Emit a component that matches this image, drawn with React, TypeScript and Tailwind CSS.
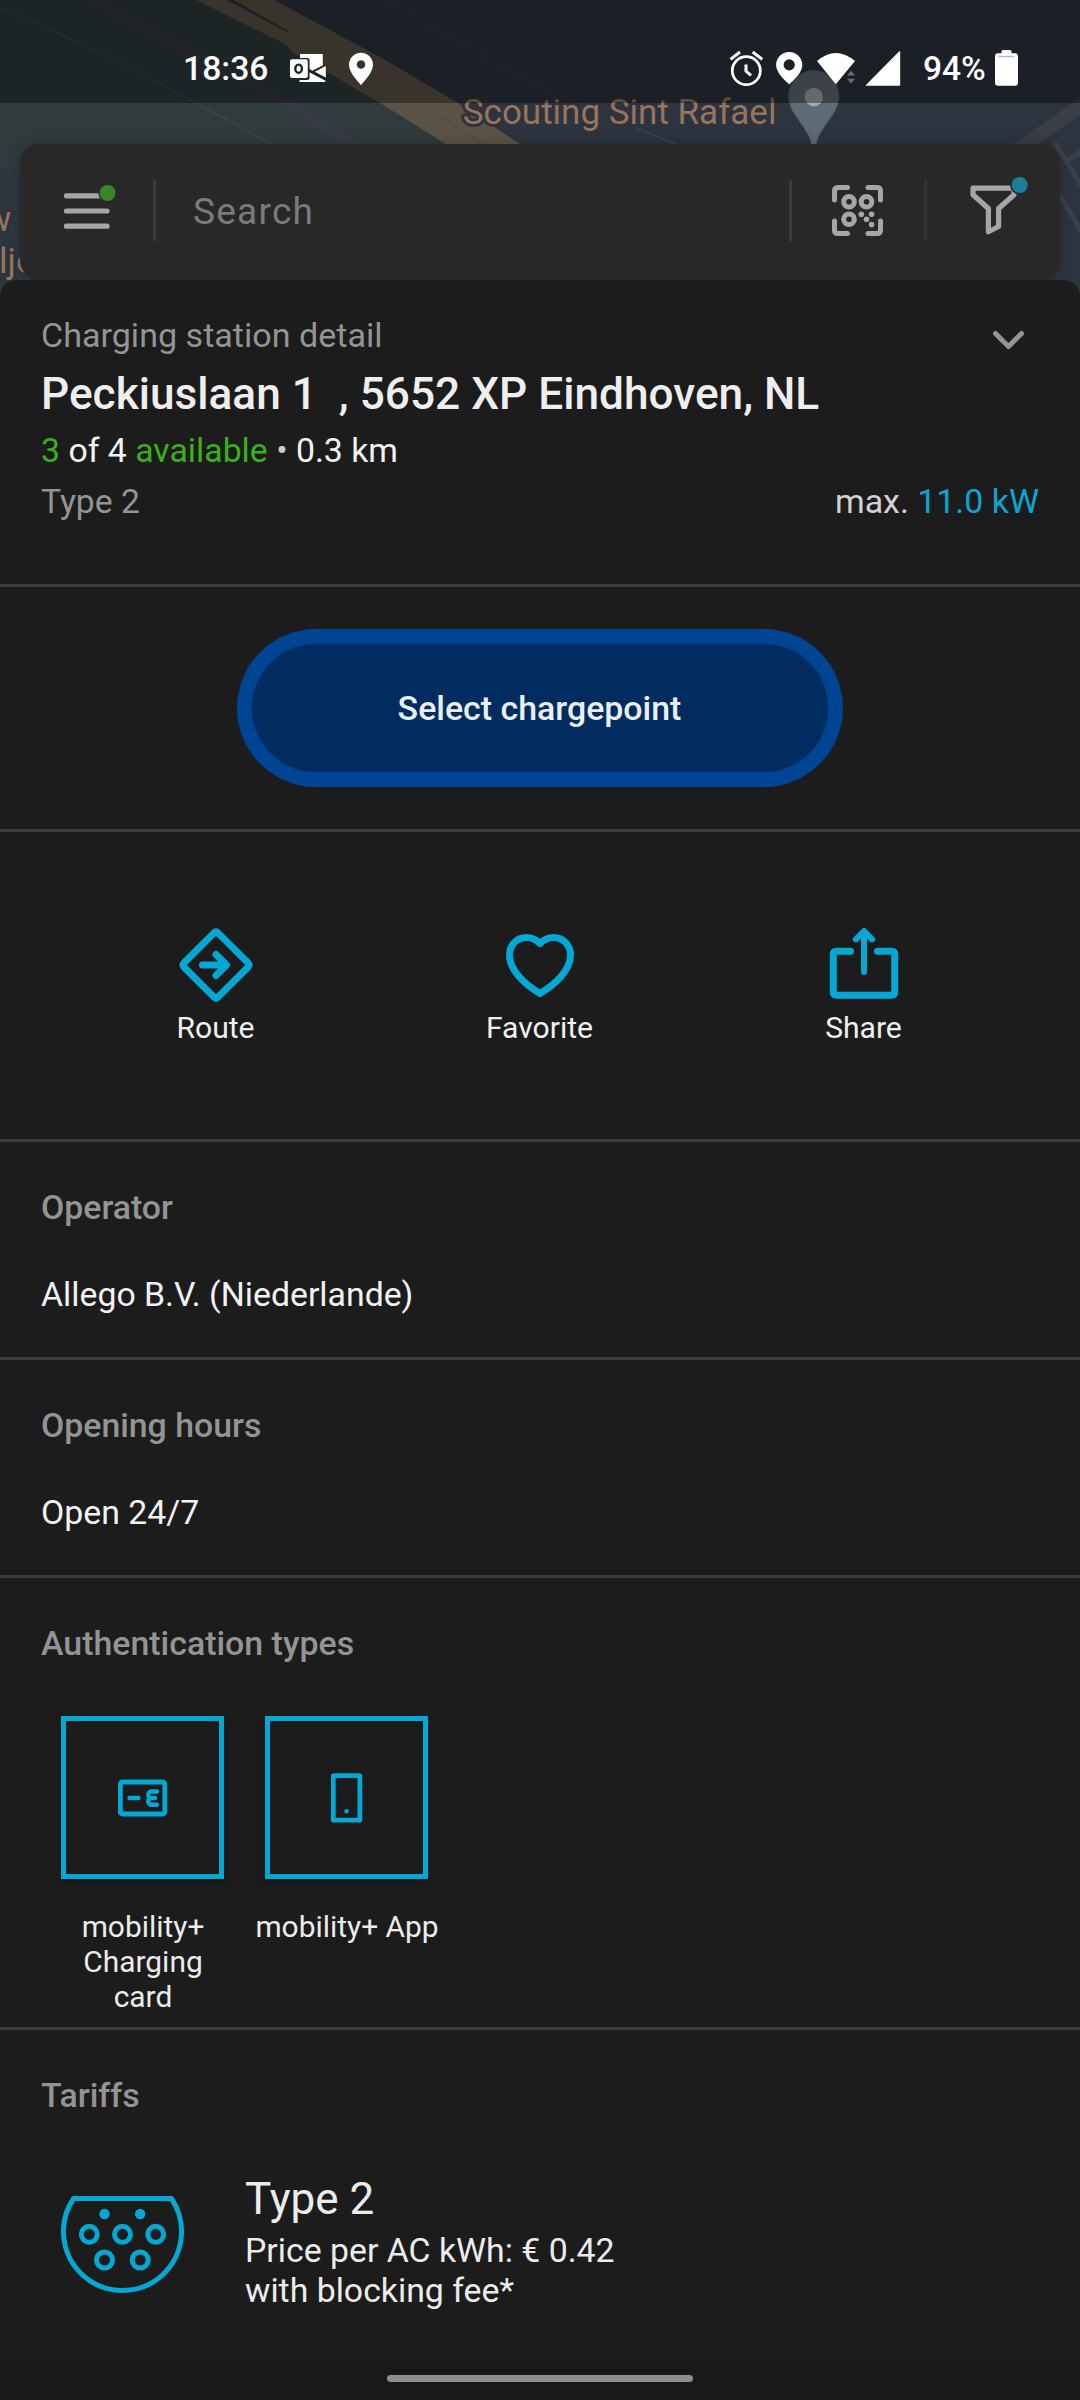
import React from "react";

const CYAN = "#03a9d4";

/* ---------- Map backdrop ---------- */
function MapBackdrop() {
  return (
    <svg className="absolute left-0 top-0" width="1080" height="304" viewBox="0 0 1080 304">
      <rect width="1080" height="304" fill="#2d343f" />
      <path d="M0 0H235L500 144V304H0Z" fill="#2f3b3d" />
      <path d="M0 170H24V304H0Z" fill="#2c383e" />
      <path d="M81 0H105L298 103L363 144H341L277 103Z" fill="#383a44" />
      <path d="M0 7L117 60L196 103L272 144" fill="none" stroke="#3c4547" strokeWidth="1.6" />
      <path d="M196 0H274L382 58L458 103L520 144H446L380 103L292 52L285 44Z" fill="#5b5346" />
      <path d="M227 0H234L291 32.5L285 31Z" fill="#2d343a" />
      <path d="M440 116L482 144" stroke="#4a453e" strokeWidth="1" />
      <path d="M383 0L540 87L605 115" fill="none" stroke="#363c46" strokeWidth="1.8" />
      <path d="M636 128L678 145" stroke="#3c414b" strokeWidth="1.8" />
      <path d="M1013 144L1080 98V115L1038 144Z" fill="#3a3e48" />
      <path d="M1056 144L1082 187M1066 162L1082 151M1060 196L1082 232" fill="none" stroke="#3a3f49" strokeWidth="5" strokeLinecap="round" />
      <g
        fontFamily="Roboto, sans-serif"
        fontSize="35"
        fill="#98755a"
        stroke="#2d343f"
        strokeWidth="6"
        strokeLinejoin="round"
        paintOrder="stroke"
      >
        <text x="462.8" y="123.500">Scouting Sint Rafael</text>
        <text x="-15" y="231">w</text>
        <text x="-1" y="273">ljo</text>
      </g>
      <path
        d="M813.8 70.7C827.6 70.7 838.8 82 838.8 96C838.8 115 818 127 816 144V150H811.6V144C809.6 127 788.8 115 788.8 96C788.8 82 800 70.7 813.8 70.7Z"
        fill="#5f6c75"
        stroke="#50626b"
        strokeWidth="1.2"
      />
      <circle cx="813.8" cy="97" r="9.2" fill="#a9a9a9" />
    </svg>
  );
}

/* ---------- Status bar ---------- */
function OutlookIcon() {
  return (
    <svg width="38" height="40" viewBox="289 49 38 40">
      <path d="M300 54H322.8V65.2L312.5 70.8L300 64Z" fill="#fff" />
      <path d="M325.8 66V77.6L314.8 71.8Z" fill="#fff" />
      <path d="M299.5 76H308V71.5L325.8 81L325 82H299.5Z" fill="#fff" />
      <rect x="289" y="58" width="20.6" height="22" rx="2.5" fill="#22282a" />
      <rect x="290" y="59.3" width="17.8" height="18.6" rx="2" fill="#fff" />
      <ellipse cx="298.6" cy="68.7" rx="3.3" ry="4.1" fill="none" stroke="#1e2426" strokeWidth="2.4" />
    </svg>
  );
}

function StatusBar() {
  return (
    <div className="relative flex h-[103px] w-full shrink-0 items-start bg-black/38 pl-[183px] pr-[62px] pt-[49px] text-[34px] font-medium leading-[40px] text-white">
      <span className="w-[106px] text-[33.7px]">18:36</span>
      <OutlookIcon />
      <svg className="ml-[21px]" width="26" height="40" viewBox="348 49 26 40">
        <path
          fillRule="evenodd"
          d="M361 52.7C367.6 52.7 373 58 373 64.6C373 72.5 364.5 81 361 85.2C357.500 81 349 72.500 349 64.6C349 58 354.4 52.7 361 52.7ZM361 60.200A4.300 4.300 0 1 0 361 68.800A4.300 4.300 0 1 0 361 60.200Z"
          fill="#fff"
        />
      </svg>
      <div className="ml-auto flex items-start">
        <svg width="34" height="40" viewBox="729 49 34 40" fill="none" stroke="#fff" strokeWidth="2.7">
          <circle cx="746.3" cy="70.7" r="14" />
          <path d="M746 64.500V71L751 75.500M730.500 59.400L740 52M752.700 52L762.200 59.400" strokeWidth="3" />
        </svg>
        <svg className="ml-3" width="28" height="40" viewBox="775 49 28 40">
          <path
            fillRule="evenodd"
            d="M789.2 52C796.5 52 802.3 57.700 802.3 65C802.3 73 793 80.500 789.2 84.500C785.400 80.500 776.1 73 776.1 65C776.1 57.700 781.900 52 789.2 52ZM789.2 59.300A5.600 5.600 0 1 0 789.2 70.500A5.600 5.600 0 1 0 789.2 59.300Z"
            fill="#fff"
          />
        </svg>
        <svg className="ml-[13px]" width="41" height="40" viewBox="816 49 41 40">
          <path d="M817 61Q835.8 44.800 855 61L835.8 84.200Z" fill="#fff" />
          <path d="M851 70.700L855 75.500H847ZM847 78.700H855L851 83.500Z" fill="#6b6c70" />
        </svg>
        <svg className="ml-2" width="36" height="40" viewBox="865 49 36 40">
          <path d="M900.2 52V84.500Q900.2 85.800 899 85.800H866.500Q865.200 85.800 866.200 84.700L899 51.600Q900.2 50.800 900.2 52Z" fill="#fff" />
        </svg>
        <span className="ml-[22px] w-[72px] text-[33.5px]">94%</span>
        <svg width="23" height="40" viewBox="995 49 23 40">
          <path d="M1003 50H1010Q1011.500 50 1011.500 51.500V53.300H1015Q1018 53.300 1018 56.300V82.800Q1018 85.800 1015 85.800H998Q995 85.800 995 82.800V56.300Q995 53.300 998 53.300H1001.500V51.500Q1001.500 50 1003 50Z" fill="#fff" />
          <path d="M998.500 56.500H1014.500" stroke="#b9b9b9" strokeWidth="1.4" />
        </svg>
      </div>
    </div>
  );
}

/* ---------- Search card ---------- */
function SearchCard() {
  return (
    <div className="relative mx-5 mt-[41px] flex h-[136px] shrink-0 items-center rounded-[20px] bg-[#282828] pb-[3px] shadow-[0_0_14px_rgba(0,0,0,0.22)]">
      <div className="flex w-[133px] justify-center">
        <svg width="60" height="60" viewBox="57 180.500 60 60">
          <path d="M66.400 195.300H107M66.400 210.500H107M66.400 225.700H107" stroke="#a6a6a6" strokeWidth="5.200" strokeLinecap="round" />
          <circle cx="107.600" cy="192.500" r="9.300" fill="#282828" />
          <circle cx="107.600" cy="192.500" r="8" fill="#398526" />
        </svg>
      </div>
      <div className="h-[61px] w-[3px] bg-[#3b3b3b]" />
      <div className="flex-1 pl-[37px] pt-[3px] text-[37px] leading-[44px] tracking-[1.25px] text-[#7b7b7b]">Search</div>
      <div className="h-[61px] w-[3px] bg-[#3b3b3b]" />
      <div className="flex w-[132px] justify-center pr-[1px]">
        <svg width="51" height="51" viewBox="0 0 51 51" fill="none" stroke="#a6a6a6" strokeWidth="5" strokeLinecap="round" strokeLinejoin="round">
          <path d="M2.500 15V6Q2.500 2.500 6 2.500H15.500M36 2.500H45Q48.500 2.500 48.500 6V15M48.500 36V45Q48.500 48.500 45 48.500H36M15.500 48.500H6Q2.500 48.500 2.500 45V36" />
          <circle cx="17" cy="16.700" r="5.300" />
          <circle cx="34.500" cy="16.700" r="5.300" />
          <circle cx="17" cy="34.300" r="5.300" />
          <g fill="#a6a6a6" stroke="none">
            <circle cx="29.300" cy="29.200" r="2.800" />
            <circle cx="39.600" cy="29.200" r="2.800" />
            <circle cx="34.500" cy="34.300" r="2.800" />
            <circle cx="39.600" cy="39.600" r="2.800" />
          </g>
        </svg>
      </div>
      <div className="h-[61px] w-[3px] bg-[#333333]" />
      <div className="flex w-[133px] justify-center">
        <svg width="70" height="70" viewBox="959 175.500 70 70">
          <path
            d="M973 187.600H1014V194.200L998.600 208V226L988.400 231.200V208L973 194.200Z"
            fill="none"
            stroke="#a6a6a6"
            strokeWidth="5.200"
            strokeLinejoin="round"
          />
          <circle cx="1019.700" cy="184.500" r="9.600" fill="#282828" />
          <circle cx="1019.700" cy="184.500" r="8" fill="#1a7f96" />
        </svg>
      </div>
    </div>
  );
}

/* ---------- Sheet ---------- */
function Divider() {
  return <div className="h-[3px] w-full shrink-0 bg-[#3c3c3c]" />;
}

function StationHeader() {
  return (
    <div className="h-[304px] shrink-0 pl-[41px] pr-[41px] pt-[35px] text-[33.9px] leading-[40px]">
      <div className="flex h-10 justify-between pr-[14px]">
        <span className="text-[34.1px] text-[#949494]">Charging station detail</span>
        <svg className="mt-[9px]" width="33" height="33" viewBox="0 0 33 33">
          <path d="M3.500 9.500L16.500 22.500L29.500 9.500" fill="none" stroke="#949494" strokeWidth="5" strokeLinecap="round" strokeLinejoin="round" />
        </svg>
      </div>
      <h1 className="mt-[13px] whitespace-pre text-[44.2px] font-medium leading-[52px] text-[#eeeeee]">{"Peckiuslaan 1  , 5652 XP Eindhoven, NL"}</h1>
      <div className="mt-[11px] text-[33.8px] text-[#f2f2f2]">
        <span className="text-[#3ab01f]">3</span> of 4 <span className="text-[#3ab01f]">available</span>{" "}
        <span className="text-[#cccccc]">•</span> 0.3 km
      </div>
      <div className="mt-[11px] flex justify-between">
        <span className="text-[33.700px] text-[#949494]">Type 2</span>
        <span className="text-[#d2d2d2]">
          max. <span className="text-[#0ba6d2]">11.0 kW</span>
        </span>
      </div>
    </div>
  );
}

function Action({ label, children }: { label: string; children: React.ReactNode }) {
  return (
    <div className="flex w-[324px] flex-col items-center">
      <svg width="84" height="84" viewBox="0 0 84 84" fill="none" stroke={CYAN} strokeWidth="7" strokeLinecap="round" strokeLinejoin="round">
        {children}
      </svg>
      <span className="mt-[3px] pr-[1px] text-[30.1px] leading-[36px] text-[#f0f0f0]">{label}</span>
    </div>
  );
}

function InfoSection({ title, text }: { title: string; text: string }) {
  return (
    <div className="h-[215px] shrink-0 px-[41px] pt-[46px] text-[33.8px] leading-[40px]">
      <h2 className="font-medium text-[#949494]">{title}</h2>
      <p className="mt-[47px] text-[#f2f2f2]">{text}</p>
    </div>
  );
}

function AuthType({ label, children }: { label: React.ReactNode; children: React.ReactNode }) {
  return (
    <div className="flex w-[204px] flex-col items-center">
      <div className="mr-[1px] flex h-[163px] w-[163px] items-center justify-center border-5 border-[#03a9d4] bg-[#1c1c1c] shadow-[0_4px_6px_rgba(0,0,0,0.25)]">
        <svg width="54" height="54" viewBox="0 0 54 54" fill="none" stroke={CYAN} strokeWidth="4.800" strokeLinecap="round" strokeLinejoin="round">
          {children}
        </svg>
      </div>
      <span className="mt-[30px] text-center text-[29.9px] leading-[35px] text-[#ececec]">{label}</span>
    </div>
  );
}

function Type2Plug() {
  return (
    <svg className="mt-[23px]" width="124" height="100" viewBox="0 0 124 100" fill="none" stroke={CYAN} strokeWidth="5">
      <path d="M12.600 2.500H110.400A59 59 0 1 1 12.600 2.500Z" strokeLinejoin="round" />
      <g fill={CYAN} stroke="none">
        <circle cx="43.500" cy="18" r="5.200" />
        <circle cx="79.200" cy="18" r="5.200" />
      </g>
      <circle cx="28.300" cy="38.300" r="8" />
      <circle cx="61.500" cy="38.300" r="8" />
      <circle cx="94.700" cy="38.300" r="8" />
      <circle cx="43.500" cy="64" r="8" />
      <circle cx="79.200" cy="64" r="8" />
    </svg>
  );
}

export default function App() {
  return (
    <div className="relative flex h-[2400px] w-[1080px] flex-col overflow-hidden bg-[#1c1c1c] font-[Roboto,sans-serif]">
      <MapBackdrop />
      <StatusBar />
      <SearchCard />
      <main className="relative flex flex-1 flex-col rounded-t-[16px] bg-[#1c1c1c]">
        <StationHeader />
        <Divider />
        <div className="flex h-[242px] shrink-0 items-center justify-center pr-[1px]">
          <button className="h-[158px] w-[606px] rounded-full border-15 border-[#004494] bg-[#002c5f] pt-[2px] text-[33.9px] font-medium leading-[40px] text-[#ebeff5]">
            Select chargepoint
          </button>
        </div>
        <Divider />
        <div className="flex h-[307px] shrink-0 justify-center pt-[91px]">
          <Action label="Route">
            <path d="M39.800 10.100Q42 8 44.200 10.100L73.900 39.800Q76 42 73.900 44.200L44.200 73.900Q42 76 39.800 73.900L10.100 44.200Q8 42 10.100 39.800Z" />
            <path d="M28.500 42H52M42 31.500L52.500 42L42 52.500" />
          </Action>
          <Action label="Favorite">
            <path d="M42 20.500C37.500 16 33 14.500 28.500 14.500C18.500 14.500 11.500 22.500 11.500 32C11.500 47 26 61 42 70.500C58 61 72.500 47 72.500 32C72.500 22.500 65.500 14.500 55.500 14.500C51 14.500 46.500 16 42 20.500Z" />
          </Action>
          <Action label="Share">
            <path d="M28.500 28.300H14.500Q11.300 28.300 11.300 31.500V69Q11.300 72.200 14.500 72.200H69.500Q72.700 72.200 72.700 69V31.500Q72.700 28.300 69.500 28.300H55.500" />
            <path d="M42 9V49M33.800 16.300L42 8L50.200 16.300" strokeWidth="6" />
          </Action>
        </div>
        <Divider />
        <InfoSection title="Operator" text="Allego B.V. (Niederlande)" />
        <Divider />
        <InfoSection title="Opening hours" text="Open 24/7" />
        <Divider />
        <div className="h-[449px] shrink-0 px-[41px] pt-[46px]">
          <h2 className="text-[33.9px] font-medium leading-[40px] text-[#949494]">Authentication types</h2>
          <div className="mt-[52px] flex">
            <AuthType
              label={
                <>
                  mobility+
                  <br />
                  Charging
                  <br />
                  card
                </>
              }
            >
              <rect x="4.400" y="11" width="44.400" height="32" rx="2" />
              <path d="M13.500 27H22.500M41 20.500H35.500A3.200 3.200 0 0 0 35.500 27H39M35.500 27A3.300 3.300 0 0 0 35.500 33.700H41" strokeWidth="4.400" />
            </AuthType>
            <AuthType label="mobility+ App">
              <rect x="13.300" y="4.600" width="26.600" height="44.600" rx="0.500" />
              <circle cx="26.600" cy="40.300" r="2.300" fill={CYAN} stroke="none" />
            </AuthType>
          </div>
        </div>
        <Divider />
        <div className="flex-1 px-[41px] pt-[46px]">
          <h2 className="text-[33.9px] font-medium leading-[40px] text-[#949494]">Tariffs</h2>
          <div className="mt-[57px] flex pl-5 text-[33.8px] leading-[40px] text-[#ececec]">
            <Type2Plug />
            <div className="ml-[60px]">
              <div className="mb-[6px] text-[44px] leading-[52px]">Type 2</div>
              <div>Price per AC kWh: € 0.42</div>
              <div>with blocking fee*</div>
            </div>
          </div>
        </div>
        <div className="flex h-[41px] shrink-0 justify-center bg-[#191919] pt-[16px]">
          <div className="h-[7px] w-[306px] rounded-full bg-[#8d8d8d]" />
        </div>
      </main>
    </div>
  );
}
